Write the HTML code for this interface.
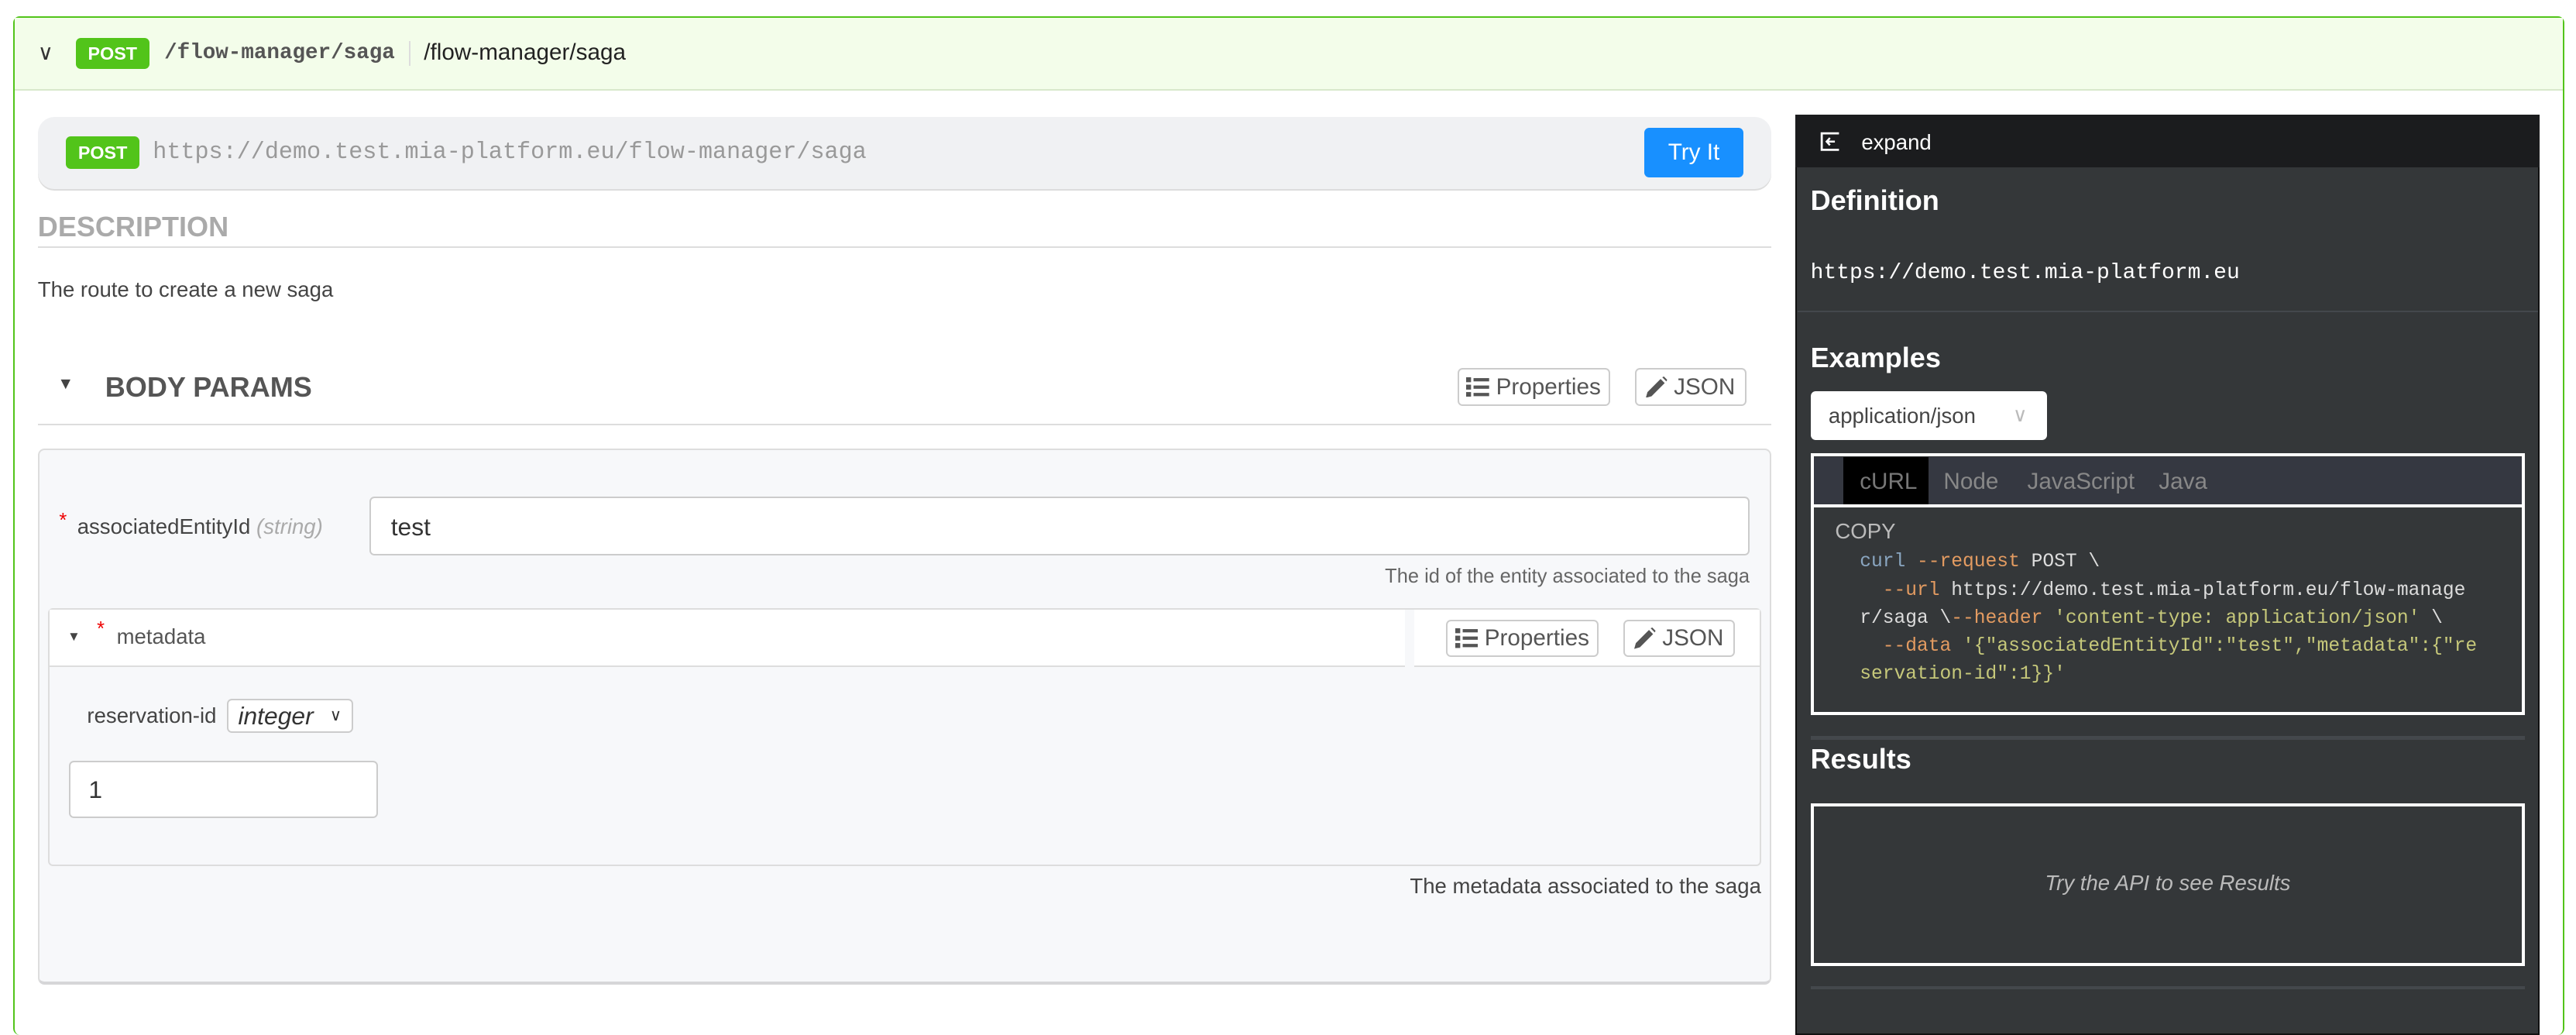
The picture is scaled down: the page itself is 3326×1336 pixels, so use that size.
<!DOCTYPE html>
<html><head><meta charset="utf-8">
<style>
html,body{margin:0;padding:0;background:#fff;}
body{width:1568px;height:613px;overflow:hidden;zoom:2.1212;font-family:"Liberation Sans",Arial,sans-serif;position:relative;}
.a{position:absolute;}
.mono{font-family:"Liberation Mono","DejaVu Sans Mono",monospace;}
.badge{background:#52c41a;color:#fff;font-weight:bold;font-size:11px;border-radius:3px;text-align:center;}
.btn{border:1px solid #ccc;border-radius:3px;background:#fff;color:#555;font-size:14px;box-sizing:border-box;display:flex;align-items:center;justify-content:center;gap:4px;}
</style></head><body>
<div class="a" style="left:8px;top:10px;width:1553px;height:620px;border:1px solid #52c41a;border-radius:4px;box-sizing:border-box;border-bottom:none;"></div>
<div class="a" style="left:9px;top:11px;width:1551px;height:43px;background:#f3fdea;border-bottom:1px solid #d8e8cc;"></div>
<div class="a" style="left:23px;top:24px;font-size:13px;color:#333;">&#8744;</div>
<div class="a badge" style="left:46px;top:23px;width:45px;height:19px;line-height:19px;">POST</div>
<div class="a mono" style="left:100px;top:25px;font-size:13px;font-weight:bold;color:#555;">/flow-manager/saga</div>
<div class="a" style="left:249px;top:25px;width:1px;height:15px;background:#ddd;"></div>
<div class="a" style="left:258px;top:24px;font-size:14px;color:#222;">/flow-manager/saga</div>

<div class="a" style="left:23px;top:71px;width:1055px;height:44px;background:#f0f1f3;border-radius:10px;box-shadow:0 1px 0 #ddd;"></div>
<div class="a badge" style="left:40px;top:83px;width:45px;height:20px;line-height:20px;">POST</div>
<div class="a mono" style="left:93px;top:85px;font-size:14.2px;color:#999;">https://demo.test.mia-platform.eu/flow-manager/saga</div>
<div class="a" style="left:1001px;top:78px;width:60px;height:30px;background:#1890ff;border-radius:3px;color:#fff;font-size:14px;line-height:30px;text-align:center;">Try It</div>

<div class="a" style="left:23px;top:128px;font-size:17px;font-weight:bold;color:#aaa;">DESCRIPTION</div>
<div class="a" style="left:23px;top:150px;width:1055px;height:1px;background:#ddd;"></div>
<div class="a" style="left:23px;top:169px;font-size:13px;color:#444;">The route to create a new saga</div>

<div class="a" style="left:35px;top:228px;font-size:10px;color:#444;">&#9660;</div>
<div class="a" style="left:64px;top:226px;font-size:17px;font-weight:bold;color:#555;">BODY PARAMS</div>
<div class="a btn" style="left:887px;top:224px;width:93px;height:23px;">
<svg width="14" height="12" viewBox="0 0 14 12"><rect x="0" y="0" width="3" height="3" fill="#555"/><rect x="0" y="4.5" width="3" height="3" fill="#555"/><rect x="0" y="9" width="3" height="3" fill="#555"/><rect x="4.5" y="0.5" width="9.5" height="2" fill="#555"/><rect x="4.5" y="5" width="9.5" height="2" fill="#555"/><rect x="4.5" y="9.5" width="9.5" height="2" fill="#555"/></svg>Properties</div>
<div class="a btn" style="left:995px;top:224px;width:68px;height:23px;">
<svg width="13" height="13" viewBox="0 0 13 13"><path d="M0 13 L1 9.5 L9 1.5 L11.5 4 L3.5 12 Z M10 0.5 L11 0 L13 2 L12.5 3 Z" fill="#555"/></svg>JSON</div>
<div class="a" style="left:23px;top:258px;width:1055px;height:1px;background:#ddd;"></div>

<div class="a" style="left:23px;top:273px;width:1055px;height:326px;background:#f7f8fa;border:1px solid #ddd;border-radius:4px;box-sizing:border-box;border-bottom:2px solid #d6d6d8;"></div>
<div class="a" style="left:36px;top:310px;color:#e00;font-size:12px;">*</div>
<div class="a" style="left:47px;top:313px;font-size:13px;color:#444;">associatedEntityId <i style="color:#aaa;">(string)</i></div>
<div class="a" style="left:225px;top:302px;width:840px;height:36px;background:#fff;border:1px solid #ccc;border-radius:3px;box-sizing:border-box;font-size:15px;color:#333;padding:9px 12px;">test</div>
<div class="a" style="right:503px;top:344px;font-size:12px;color:#666;">The id of the entity associated to the saga</div>

<div class="a" style="left:29px;top:370px;width:1043px;height:157px;border:1px solid #ddd;border-radius:3px;box-sizing:border-box;background:#f7f8fa;"></div>
<div class="a" style="left:30px;top:371px;width:825px;height:34px;background:#fff;border-bottom:1px solid #ddd;"></div>
<div class="a" style="left:861px;top:371px;width:210px;height:34px;background:#fff;border-bottom:1px solid #ddd;"></div>
<div class="a" style="left:41px;top:383px;font-size:8px;color:#444;">&#9660;</div>
<div class="a" style="left:59px;top:376px;color:#e00;font-size:12px;">*</div>
<div class="a" style="left:71px;top:380px;font-size:13px;color:#555;">metadata</div>
<div class="a btn" style="left:880px;top:377px;width:93px;height:23px;">
<svg width="14" height="12" viewBox="0 0 14 12"><rect x="0" y="0" width="3" height="3" fill="#555"/><rect x="0" y="4.5" width="3" height="3" fill="#555"/><rect x="0" y="9" width="3" height="3" fill="#555"/><rect x="4.5" y="0.5" width="9.5" height="2" fill="#555"/><rect x="4.5" y="5" width="9.5" height="2" fill="#555"/><rect x="4.5" y="9.5" width="9.5" height="2" fill="#555"/></svg>Properties</div>
<div class="a btn" style="left:988px;top:377px;width:68px;height:23px;">
<svg width="13" height="13" viewBox="0 0 13 13"><path d="M0 13 L1 9.5 L9 1.5 L11.5 4 L3.5 12 Z M10 0.5 L11 0 L13 2 L12.5 3 Z" fill="#555"/></svg>JSON</div>
<div class="a" style="left:53px;top:428px;font-size:13px;color:#444;">reservation-id</div>
<div class="a" style="left:138px;top:425px;width:77px;height:21px;border:1px solid #ccc;border-radius:3px;box-sizing:border-box;background:#fff;font-size:15px;font-style:italic;color:#333;padding:0 6px;line-height:19px;">integer<span style="position:absolute;right:6px;font-style:normal;font-size:10px;">&#8744;</span></div>
<div class="a" style="left:42px;top:463px;width:188px;height:35px;border:1px solid #ccc;border-radius:3px;box-sizing:border-box;background:#fff;font-size:15px;color:#333;padding:8px 11px;">1</div>
<div class="a" style="right:496px;top:532px;font-size:13px;color:#444;">The metadata associated to the saga</div>

<div class="a" style="left:1093px;top:70px;width:453px;height:560px;background:#343739;border:1px solid #111;box-sizing:border-box;"></div>
<div class="a" style="left:1093px;top:70px;width:453px;height:32px;background:#1b1c1e;"></div>
<svg class="a" style="left:1108px;top:80px;" width="13" height="12" viewBox="0 0 13 12"><path d="M11.5 1 H1 V11 H11.5" fill="none" stroke="#fff" stroke-width="1.3"/><path d="M4 6 H9 M6 3.8 L4 6 L6 8.2" fill="none" stroke="#fff" stroke-width="1.2"/></svg>
<div class="a" style="left:1133px;top:79px;font-size:13px;color:#fff;">expand</div>
<div class="a" style="left:1102px;top:112px;font-size:17px;font-weight:bold;color:#fff;">Definition</div>
<div class="a mono" style="left:1102px;top:159px;font-size:13.2px;color:#fff;">https://demo.test.mia-platform.eu</div>
<div class="a" style="left:1094px;top:189px;width:451px;height:1px;background:#44484c;"></div>
<div class="a" style="left:1102px;top:208px;font-size:17px;font-weight:bold;color:#fff;">Examples</div>
<div class="a" style="left:1102px;top:238px;width:144px;height:30px;background:#fff;border-radius:3px;font-size:13px;color:#444;line-height:30px;padding-left:11px;box-sizing:border-box;">application/json<span style="position:absolute;right:12px;color:#bbb;font-size:12px;">&#8744;</span></div>
<div class="a" style="left:1102px;top:276px;width:435px;height:159px;border:2px solid #fff;box-sizing:border-box;background:#343739;"></div>
<div class="a" style="left:1104px;top:278px;width:431px;height:29px;background:#353841;border-bottom:2px solid #fff;"></div>
<div class="a" style="left:1122px;top:278px;width:52px;height:29px;background:#000;"></div>
<div class="a" style="left:1132px;top:285px;font-size:14px;color:#777;">cURL</div>
<div class="a" style="left:1183px;top:285px;font-size:14px;color:#888;">Node</div>
<div class="a" style="left:1234px;top:285px;font-size:14px;color:#888;">JavaScript</div>
<div class="a" style="left:1314px;top:285px;font-size:14px;color:#888;">Java</div>
<div class="a" style="left:1117px;top:316px;font-size:13px;color:#bbb;">COPY</div>
<div class="a mono" style="left:1132px;top:334px;font-size:11.6px;color:#ddd;line-height:17px;white-space:pre;"><span style="color:#8aa6c1">curl</span> <span style="color:#e39b61">--request</span> POST \
  <span style="color:#e39b61">--url</span> https://demo.test.mia-platform.eu/flow-manage
r/saga \<span style="color:#e39b61">--header</span> <span style="color:#c6c87a">'content-type: application/json'</span> \
  <span style="color:#e39b61">--data</span> <span style="color:#c6c87a">'{"associatedEntityId":"test","metadata":{"re
servation-id":1}}'</span></div>
<div class="a" style="left:1102px;top:448px;width:435px;height:2px;background:#44484c;"></div>
<div class="a" style="left:1102px;top:452px;font-size:17px;font-weight:bold;color:#fff;">Results</div>
<div class="a" style="left:1102px;top:489px;width:435px;height:99px;border:2px solid #fff;box-sizing:border-box;"></div>
<div class="a" style="left:1102px;top:530px;width:435px;text-align:center;font-size:13px;font-style:italic;color:#bbb;">Try the API to see Results</div>
<div class="a" style="left:1102px;top:600px;width:435px;height:2px;background:#44484c;"></div>
</body></html>
